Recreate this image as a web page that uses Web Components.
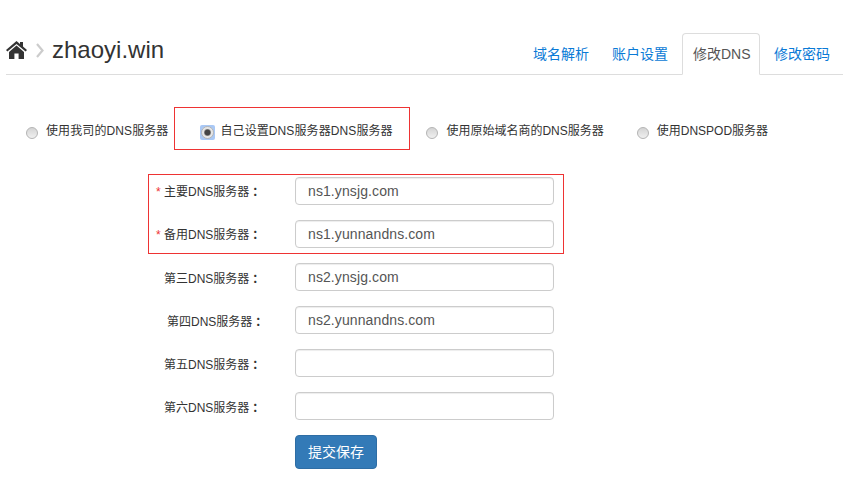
<!DOCTYPE html>
<html lang="zh">
<head>
<meta charset="utf-8">
<title>修改DNS</title>
<style>
  html, body { margin: 0; padding: 0; background: #fff; }
  body { font-family: "Liberation Sans", "Noto Sans CJK SC", sans-serif; color: #333; }
</style>
</head>
<body>
<dns-page></dns-page>

<script>
// 頁首：圖示、域名、分頁
class DnsHeader extends HTMLElement {
  constructor() {
    super();
    this.attachShadow({ mode: 'open' });
    this.shadowRoot.innerHTML = `
      <style>
        :host { display: flex; align-items: flex-end; justify-content: space-between; height: 74px; margin: 0 6px; border-bottom: 1px solid #ddd; }
        .crumb { display: flex; align-items: center; height: 24px; margin-bottom: 12px; }
        svg { display: block; }
        .home { margin-right: 9px; }
        .sep { margin-right: 8px; }
        h1 { margin: 0; font: 400 24px/24px "Liberation Sans", "Noto Sans CJK SC", sans-serif; color: #333; }
        nav { display: flex; gap: 3px; margin-right: 2px; margin-bottom: -1px; }
      </style>
      <div class="crumb">
        <svg class="home" width="21" height="18" viewBox="0 0 21 18"><path fill="#333" d="M10.5 0 L14 3 V1 H17 V5.6 L21 9 L19.6 10.6 L10.5 2.9 L1.4 10.6 L0 9 Z"/><path fill="#333" d="M10.5 4.6 L18 10.9 V18 H12.6 V12.4 H8.4 V18 H3 V10.9 Z"/></svg>
        <svg class="sep" width="8" height="15" viewBox="0 0 8 15"><path fill="none" stroke="#ccc" stroke-width="2.2" d="M1 1 L6.5 7.5 L1 14"/></svg>
        <h1>zhaoyi.win</h1>
      </div>
      <nav><slot></slot></nav>
    `;
  }
}

class DnsTab extends HTMLElement {
  constructor() {
    super();
    this.attachShadow({ mode: 'open' });
    this.shadowRoot.innerHTML = `
      <style>
        :host { display: block; box-sizing: border-box; height: 42px; padding: 10px 10px 0; border: 1px solid transparent; border-radius: 4px 4px 0 0; font-size: 14px; line-height: 20px; color: #0a7ad6; }
        :host([active]) { width: 78px; padding-right: 0; white-space: nowrap; color: #555; background: #fff; border-color: #ddd; border-bottom-color: #fff; }
      </style>
      <slot></slot>
    `;
  }
}

// 單選項
class DnsRadio extends HTMLElement {
  constructor() {
    super();
    this.attachShadow({ mode: 'open' });
    this.shadowRoot.innerHTML = `
      <style>
        :host { display: flex; align-items: center; margin-top: 8px; font-size: 12px; line-height: 16px; letter-spacing: .1px; color: #333; }
        .wrap { flex: none; display: flex; margin-right: 8px; }
        .dot { box-sizing: border-box; flex: none; width: 12px; height: 12px; border: 1px solid #b4b4b4; border-radius: 50%; background: linear-gradient(#d4d4d4, #f0f0f0); }
        .txt { margin-top: -4px; }
        :host([checked]) .wrap { box-sizing: border-box; width: 15px; height: 15px; margin-right: 5px; padding: 1px; background: #a9c8f5; border-radius: 2px; }
        :host([checked]) .dot { width: 13px; height: 13px; background: radial-gradient(circle, #444 0 2.6px, #aaa 3.4px, #e4e4e4 4px, #eee); }
      </style>
      <span class="wrap"><span class="dot"></span></span><span class="txt"><slot></slot></span>
    `;
  }
}

// 表單列
class DnsField extends HTMLElement {
  constructor() {
    super();
    this.attachShadow({ mode: 'open' });
    this.shadowRoot.innerHTML = `
      <style>
        :host { display: flex; align-items: center; height: 28px; font-size: 12px; color: #333; }
        label { box-sizing: border-box; width: 147px; padding: 2px 0 0 16px; white-space: nowrap; line-height: 28px; }
        :host([required]) label { padding-top: 0; }
        :host([pad]) label { padding-left: 19px; }
        i { display: none; width: 8px; margin-left: -8px; font-style: normal; color: #e33; }
        :host([required]) i { display: inline-block; }
        b { margin-left: 3px; font-family: "Noto Sans CJK TC", sans-serif; }
        input { box-sizing: border-box; width: 259px; height: 28px; padding: 0 12px; border: 1px solid #ccc; border-radius: 4px; box-shadow: inset 0 1px 1px rgba(0,0,0,.075); font: 14px "Liberation Sans", sans-serif; letter-spacing: .1px; color: #555; outline: 0; }
      </style>
      <label><i>*</i><slot></slot><b>：</b></label><input type="text">
    `;
  }
  connectedCallback() {
    this.shadowRoot.querySelector('input').value = this.getAttribute('value') || '';
  }
}

class DnsPage extends HTMLElement {
  constructor() {
    super();
    this.attachShadow({ mode: 'open' });
    this.shadowRoot.innerHTML = `
      <style>
        :host { display: block; width: 849px; height: 485px; overflow: hidden; font-family: "Liberation Sans", "Noto Sans CJK SC", sans-serif; }
        .radios { display: flex; align-items: center; margin-top: 32px; padding-left: 26px; }
        .box { border: 1px solid #e33; box-sizing: border-box; }
        .picked { display: flex; align-items: center; width: 236px; height: 43px; margin: 0 16px 0 6px; padding-left: 25px; }
        .form { display: flex; flex-direction: column; gap: 15px; margin: 24px 0 0 148px; }
        .req { display: flex; flex-direction: column; gap: 15px; width: 416px; height: 80px; margin-bottom: -6px; padding-top: 2px; }
        .req dns-field { margin-left: -1px; }
        .btn { box-sizing: border-box; width: 82px; height: 34px; margin: 0 0 0 147px; padding: 0; border: 1px solid #2e6da4; border-radius: 4px; background: #337ab7; color: #fff; font: 14px/20px "Liberation Sans", "Noto Sans CJK SC", sans-serif; }
      </style>
      <dns-header>
        <dns-tab style="margin-right:-2px">域名解析</dns-tab>
        <dns-tab>账户设置</dns-tab>
        <dns-tab active>修改DNS</dns-tab>
        <dns-tab>修改密码</dns-tab>
      </dns-header>
      <div class="radios">
        <dns-radio>使用我司的DNS服务器</dns-radio>
        <div class="box picked"><dns-radio checked>自己设置DNS服务器DNS服务器</dns-radio></div>
        <dns-radio style="margin-right:33px;letter-spacing:0">使用原始域名商的DNS服务器</dns-radio>
        <dns-radio style="letter-spacing:0">使用DNSPOD服务器</dns-radio>
      </div>
      <div class="form">
        <div class="box req">
          <dns-field required value="ns1.ynsjg.com">主要DNS服务器</dns-field>
          <dns-field required value="ns1.yunnandns.com">备用DNS服务器</dns-field>
        </div>
        <dns-field value="ns2.ynsjg.com">第三DNS服务器</dns-field>
        <dns-field pad value="ns2.yunnandns.com">第四DNS服务器</dns-field>
        <dns-field>第五DNS服务器</dns-field>
        <dns-field>第六DNS服务器</dns-field>
        <button class="btn" type="button">提交保存</button>
      </div>
    `;
  }
}

customElements.define('dns-header', DnsHeader);
customElements.define('dns-tab', DnsTab);
customElements.define('dns-radio', DnsRadio);
customElements.define('dns-field', DnsField);
customElements.define('dns-page', DnsPage);
</script>
</body>
</html>
